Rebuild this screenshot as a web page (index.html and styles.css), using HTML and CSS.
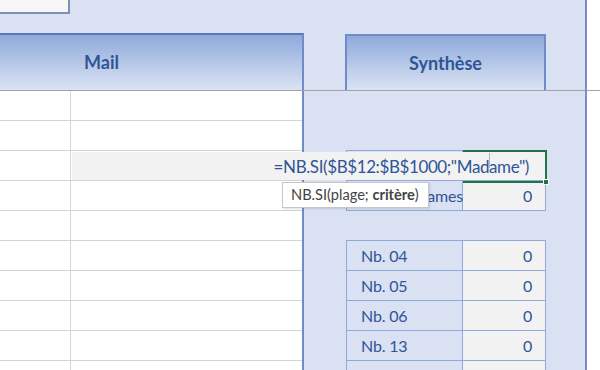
FILE: index.html
```html
<!DOCTYPE html>
<html lang="fr">
<head>
  <meta charset="UTF-8">
  <title>Synthèse - NB.SI</title>
  <link rel="stylesheet" href="styles.css">
</head>
<body>
  <div class="sheet">
    <div class="main">
      <div class="top">
        <div class="namebox"></div>
      </div>

      <div class="heads">
        <div class="head-mail">Mail</div>
        <div class="head-side">
          <div class="head-synth">Synthèse</div>
        </div>
      </div>

      <div class="body">
        <!-- left grid, columns A and B -->
        <div class="grid">
          <div class="row"><div class="c-a"></div><div class="c-b"></div></div>
          <div class="row"><div class="c-a"></div><div class="c-b"></div></div>
          <div class="row"><div class="c-a"></div><div class="c-b"></div></div>
          <div class="row"><div class="c-a"></div><div class="c-b"></div></div>
          <div class="row"><div class="c-a"></div><div class="c-b"></div></div>
          <div class="row"><div class="c-a"></div><div class="c-b"></div></div>
          <div class="row"><div class="c-a"></div><div class="c-b"></div></div>
          <div class="row"><div class="c-a"></div><div class="c-b"></div></div>
          <div class="row"><div class="c-a"></div><div class="c-b"></div></div>
          <div class="row"><div class="c-a"></div><div class="c-b"></div></div>
        </div>

        <!-- summary block -->
        <div class="panel">
          <div class="stable first">
            <!-- this row is hidden under the cell being edited -->
            <div class="srow"><div class="lbl"></div><div class="val"></div></div>
            <div class="srow"><div class="lbl">Nb. Mesdames</div><div class="val">0</div></div>
          </div>
          <div class="stable second">
            <div class="srow"><div class="lbl">Nb. 04</div><div class="val">0</div></div>
            <div class="srow"><div class="lbl">Nb. 05</div><div class="val">0</div></div>
            <div class="srow"><div class="lbl">Nb. 06</div><div class="val">0</div></div>
            <div class="srow"><div class="lbl">Nb. 13</div><div class="val">0</div></div>
            <div class="srow"><div class="lbl"></div><div class="val"></div></div>
          </div>
        </div>
      </div>
    </div>

    <div class="gutter">
      <div class="gutter-top"></div>
    </div>

    <!-- cell being edited -->
    <div class="editor">
      <span class="formula">=NB.SI($B$12:$B$1000;"Madame")</span>
      <span class="caret"></span>
    </div>
    <div class="active-cell"><span class="handle"></span></div>

    <div class="tip">NB.SI(plage; <b>critère</b>)</div>
  </div>
</body>
</html>
```

FILE: styles.css
```css
/* page */
body {
  margin: 0;
  background: #fff;
  font-family: "Lato", "Open Sans", sans-serif;
}

.sheet {
  position: relative;
  display: flex;
  width: 600px;
  height: 370px;
  overflow: hidden;
  background: #fff;
}

/* main light blue area */
.main {
  width: 585px;
  border-right: 2px solid #7490c9;
  background: #dae1f3;
  display: flex;
  flex-direction: column;
}

.top {
  flex-shrink: 0;
  height: 33px;
}

.namebox {
  width: 68px;
  height: 12px;
  background: #f6f6f6;
  border-right: 2px solid #7d8fb3;
  border-bottom: 2px solid #7d8fb3;
}

/* header band */
.heads {
  flex-shrink: 0;
  display: flex;
  height: 57px;
  border-bottom: 1px solid #a3a3a3;
}

.head-mail {
  width: 218px;
  padding-left: 84px;
  border-top: 2px solid #5a79bb;
  border-right: 2px solid #6f8bc8;
  background: linear-gradient(#8eaadb, #dbe3f3);
  color: #2f5597;
  font-weight: bold;
  font-size: 18px;
  line-height: 55px;
}

.head-side {
  flex: 1;
  padding-top: 1px;
  padding-left: 41px;
}

.head-synth {
  width: 197px;
  height: 54px;
  border: 2px solid #6f8bc8;
  border-bottom: none;
  background: linear-gradient(#8eaadb, #dbe3f3);
  color: #2f5597;
  font-weight: bold;
  font-size: 18px;
  line-height: 54px;
  text-align: center;
}

/* body */
.body {
  flex: 1;
  min-height: 0;
  display: flex;
  overflow: hidden;
}

.grid {
  width: 302px;
  border-right: 2px solid #6f8bc8;
  background: #fff;
}

.row {
  display: flex;
  height: 29px;
  border-bottom: 1px solid #d4d4d4;
}

.c-a {
  width: 70px;
  border-right: 1px solid #d6d6d6;
}

.c-b {
  flex: 1;
}

.panel {
  flex: 1;
  padding-left: 42px;
}

.stable {
  width: 198px;
  border: 1px solid #8eaadb;
  border-bottom: none;
}

.stable.first {
  margin-top: 59px;
}

.stable.second {
  margin-top: 29px;
}

.srow {
  display: flex;
  height: 29px;
  border-bottom: 1px solid #8eaadb;
  color: #2f5597;
  font-size: 16px;
  letter-spacing: -0.2px;
  line-height: 29px;
}

.lbl {
  width: 101px;
  padding-left: 14px;
  border-right: 1px solid #8eaadb;
  white-space: nowrap;
}

.val {
  flex: 1;
  padding-right: 13px;
  text-align: right;
  background: #f2f2f2;
}

.gutter {
  flex: 1;
}

.gutter-top {
  height: 90px;
  border-bottom: 1px solid #a3a3a3;
}

/* editing overlay */
.editor {
  position: absolute;
  left: 72px;
  top: 152px;
  width: 473px;
  height: 28px;
  background: #f2f2f2;
  display: flex;
  justify-content: flex-end;
  align-items: center;
  padding-right: 16px;
  box-sizing: border-box;
}

.formula {
  color: #2f5597;
  font-size: 17px;
  letter-spacing: -0.4px;
  white-space: nowrap;
}

.caret {
  position: absolute;
  left: 417px;
  top: 1px;
  width: 1px;
  height: 15px;
  background: #b5b5b5;
}

.active-cell {
  position: absolute;
  left: 463px;
  top: 150px;
  width: 82px;
  height: 29px;
  border: 2px solid #217346;
  border-left: none;
}

.handle {
  position: absolute;
  right: -4px;
  bottom: -4px;
  width: 4px;
  height: 4px;
  background: #217346;
  border: 1px solid #fff;
}

.tip {
  position: absolute;
  left: 282px;
  top: 182px;
  height: 24px;
  padding: 0 9px 0 8px;
  background: #fff;
  border: 1px solid #c6c6c6;
  box-shadow: 1px 1px 2px rgba(0, 0, 0, 0.12);
  color: #444;
  font-size: 14.6px;
  line-height: 24px;
  white-space: nowrap;
}
```
